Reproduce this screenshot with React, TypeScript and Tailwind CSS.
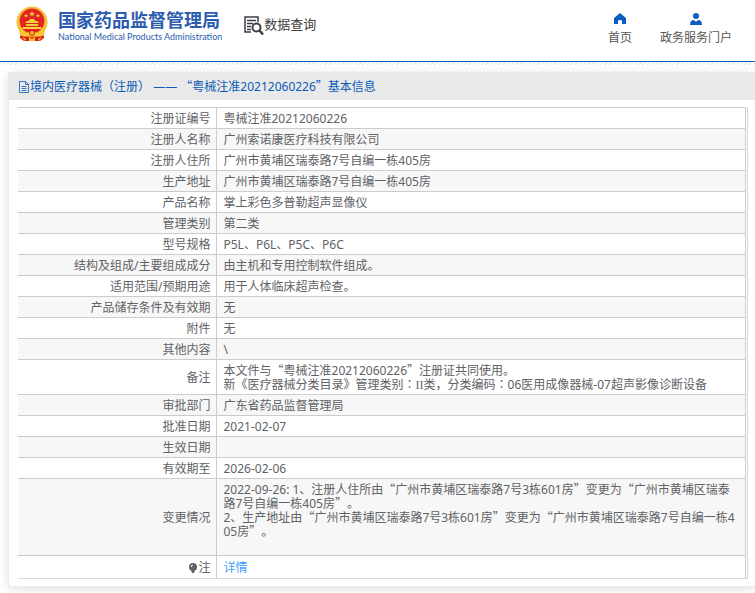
import { Fragment, type ReactNode } from 'react';

const rows: { label: string; lines: string[]; size?: string }[] = [
  { label: '注册证编号', lines: ['粤械注准20212060226'] },
  { label: '注册人名称', lines: ['广州索诺康医疗科技有限公司'] },
  { label: '注册人住所', lines: ['广州市黄埔区瑞泰路7号自编一栋405房'] },
  { label: '生产地址', lines: ['广州市黄埔区瑞泰路7号自编一栋405房'] },
  { label: '产品名称', lines: ['掌上彩色多普勒超声显像仪'] },
  { label: '管理类别', lines: ['第二类'] },
  { label: '型号规格', lines: ['P5L、P6L、P5C、P6C'] },
  { label: '结构及组成/主要组成成分', lines: ['由主机和专用控制软件组成。'] },
  { label: '适用范围/预期用途', lines: ['用于人体临床超声检查。'] },
  { label: '产品储存条件及有效期', lines: ['无'] },
  { label: '附件', lines: ['无'] },
  { label: '其他内容', lines: ['\\'] },
  {
    label: '备注',
    lines: [
      '本文件与“粤械注准20212060226”注册证共同使用。',
      '新《医疗器械分类目录》管理类别：II类，分类编码：06医用成像器械-07超声影像诊断设备',
    ],
  },
  { label: '审批部门', lines: ['广东省药品监督管理局'] },
  { label: '批准日期', lines: ['2021-02-07'] },
  { label: '生效日期', lines: [''] },
  { label: '有效期至', lines: ['2026-02-06'] },
  {
    label: '变更情况',
    size: 'pb-4',
    lines: [
      '2022-09-26: 1、注册人住所由“广州市黄埔区瑞泰路7号3栋601房”变更为“广州市黄埔区瑞泰路7号自编一栋405房”。',
      '2、生产地址由“广州市黄埔区瑞泰路7号3栋601房”变更为“广州市黄埔区瑞泰路7号自编一栋405房”。',
    ],
  },
];

// Full-width quotes, centred punctuation and serif numerals each use their own family.
function Mixed({ text }: { text: string }) {
  return (
    <>
      {text.split(/([“”]|[：（）]|II)/).map((part, i): ReactNode => {
        if (/^[“”]$/.test(part))
          return <span key={i} className="font-['Noto_Sans_CJK_SC',sans-serif] leading-none">{part}</span>;
        if (/^[：（）]$/.test(part))
          return <span key={i} lang="zh-TW" className="font-['Noto_Sans_CJK_TC',sans-serif] leading-none">{part}</span>;
        if (part === 'II')
          return <span key={i} className="font-['Liberation_Serif',serif] leading-none">{part}</span>;
        return <Fragment key={i}>{part}</Fragment>;
      })}
    </>
  );
}

function Emblem() {
  return (
    <svg className="h-9 w-8" viewBox="0 0 32 36" aria-hidden="true">
      <path d="M5 25h22l1 7-4 3H8l-4-3z" fill="#d91d1b" />
      <circle cx="16" cy="16" r="15" fill="#f7c52e" />
      <circle cx="16" cy="16" r="15" fill="none" stroke="#eda51e" strokeWidth="1" strokeDasharray="2 1" />
      <circle cx="16" cy="15" r="12.4" fill="#e12620" />
      <path d="m16 5 .8 2h2.1l-1.7 1.3.7 2.1-1.9-1.3-1.9 1.3.7-2.1L13.100 7h2.100z" fill="#fbd23d" />
      <path d="m10 8 .5 1H12l-1 1 .3 1.300-1.300-.7-1.300.7L9 10 8 9h1.500zM22 8l.5 1H24l-1 1 .3 1.300-1.300-.7-1.300.7L21 10l-1-1h1.500z" fill="#fbd23d" />
      <path d="M9 17l2-2h2l1-2h4l1 2h2l2 2zM10 18h12v2H10zM7 21h18l1 2H6z" fill="#fbd23d" />
      <path d="M3 24q6 5 10 2l3-1 3 1q4 3 10-2l-1 5q-5 3-8 1l-4-2-4 2q-3 2-8-1z" fill="#f9c62f" />
      <circle cx="16" cy="27" r="2.500" fill="#f4b52a" stroke="#d91d1b" />
      <path d="m6 31 4 2-1 2M26 31l-4 2 1 2M13 31l3 2 3-2v4h-6z" fill="#f7bd2d" />
    </svg>
  );
}

export default function App() {
  return (
    <div
      lang="zh-CN"
      className="bg-white pb-2 font-['Noto_Sans','Noto_Sans_CJK_SC',sans-serif] text-xs text-[#606266] [text-spacing-trim:space-all]"
    >
      <header className="border-b border-[#0b5cb8]">
        <div className="flex h-[61px] items-start pr-[23px] pl-4">
          <a href="#" className="flex items-start gap-2.5 pt-1.5 text-[#2b5cad]">
            <Emblem />
            <span className="pt-1">
              <span className="block text-[18px] leading-5 font-bold">国家药品监督管理局</span>
              <span className="block font-[Lato,sans-serif] text-[9px] leading-[14px] font-normal">
                National Medical Products Administration
              </span>
            </span>
          </a>
          <a href="#" className="ml-[22px] flex items-center pt-3 text-[13px] leading-5 text-[#404040]">
            <svg className="mt-1 h-5 w-5" viewBox="0 0 20 20" fill="none" stroke="#3c3c46" strokeWidth="1.500" aria-hidden="true">
              <path d="M7 16H1V1h13v5M3 4.500h9M3 7.500h6M3 10.500h4M3 13.500h4" />
              <circle cx="12.500" cy="11.500" r="4" strokeWidth="2" />
              <path d="m15.500 14.500 3.500 4" strokeWidth="2.500" />
            </svg>
            数据查询
          </a>
          <nav className="ml-auto flex gap-7 pt-[13px] text-center text-[#555]">
            <a href="#" className="flex flex-col items-center gap-1">
              <svg className="h-3 w-3" viewBox="0 0 12 12" fill="#0b5fc4" aria-hidden="true">
                <path d="M6 0 0 5v6h4V8q0-1 2-1t2 1v3h4V5z" />
              </svg>
              <span className="leading-[18px]">首页</span>
            </a>
            <a href="#" className="flex flex-col items-center gap-1">
              <svg className="h-3 w-3" viewBox="0 0 12 12" fill="#0b5fc4" aria-hidden="true">
                <circle cx="6" cy="3" r="3" />
                <path d="M0 12q0-5 4-5l2 2 2-2q4 0 4 5z" />
              </svg>
              <span className="leading-[18px]">政务服务门户</span>
            </a>
          </nav>
        </div>
      </header>
      <div className="h-[3px] bg-[repeating-linear-gradient(135deg,#e8e8e8_0_1px,#fff_1px_3px)]" />

      <main className="mt-[7px] ml-2 border border-r-0 border-[#ebebeb] shadow-[0_2px_10px_rgba(0,0,0,0.12)]">
        <h1 className="flex h-[27px] items-center bg-[#e9e9e9] pl-2.5 text-[#0b5cb8]">
          <svg className="mr-px h-3 w-2.5" viewBox="0 0 10 12" fill="none" stroke="currentColor" strokeWidth=".8" aria-hidden="true">
            <path d="M.5.500h6l3 3v8h-9zM6.500.500v3h3M2.500 5.500h5M2.500 7.500h5M2.500 9.500h5" />
          </svg>
          <span><Mixed text="境内医疗器械（注册） —— “粤械注准20212060226”基本信息" /></span>
        </h1>
        <div className="pt-[7px] pr-[7px] pb-[7px] pl-[9px]">
          <div className="border-r border-b border-[#d8d8e0] pr-px">
            <table className="w-full border-collapse border-t border-r border-[#ccc] leading-[14px]">
              <tbody>
                {rows.map(({ label, lines, size }) => (
                  <tr key={label} className="h-[21px] border-b border-[#ccc] even:bg-[#f7f7f7]">
                    <th scope="row" className="w-[198px] border-r border-[#ccc] pt-1 pr-[5px] pb-0.5 text-right font-normal">{label}</th>
                    <td className={`pt-1 pr-1.5 pl-[7px] break-all ${size ?? 'pb-0.5'}`}>
                      {lines.map((line, i) => (
                        <p key={i}><Mixed text={line} /></p>
                      ))}
                    </td>
                  </tr>
                ))}
                <tr className="h-[22px]">
                  <th scope="row" className="border-r border-[#ccc] pt-1 pr-[5px] pb-0.5 font-normal">
                    <span className="flex items-center justify-end">
                      <svg className="h-3 w-2.5" viewBox="0 0 10 12" aria-hidden="true">
                        <circle cx="5" cy="5" r="4" fill="#606266" />
                        <path d="M3 8h4l-1 3H4z" fill="#606266" />
                        <path d="M3 5q0-2 2-2" fill="none" stroke="#fff" />
                      </svg>
                      注
                    </span>
                  </th>
                  <td className="pt-1 pr-1.5 pb-0.5 pl-[7px]"><a href="#" className="text-[#409eff]">详情</a></td>
                </tr>
              </tbody>
            </table>
          </div>
        </div>
      </main>
    </div>
  );
}
